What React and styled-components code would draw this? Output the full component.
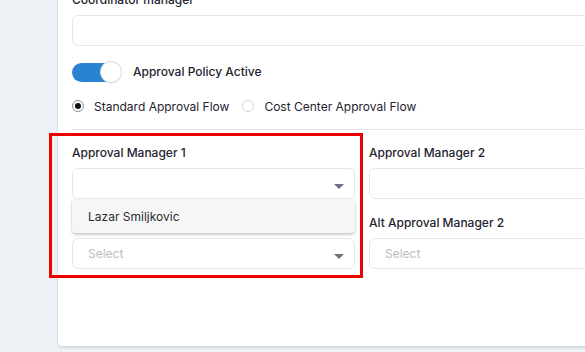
import React from "react";
import styled, { createGlobalStyle } from "styled-components";

const Global = createGlobalStyle`
  html, body { margin: 0; padding: 0; }
  body {
    background: #edf1f5;
    font-family: Inter, "Noto Sans", sans-serif;
    color: #1f2230;
    overflow: hidden;
    width: 585px;
    height: 352px;
  }
`;

const Page = styled.div`
  padding-left: 58px;
  height: 352px;
  overflow: hidden;
`;

const Card = styled.div`
  margin-top: -20px;
  width: 620px;
  background: #fff;
  border-radius: 0 0 0 4px;
  box-shadow: 0 2px 2px rgba(0, 0, 0, 0.1), -1px 0 1px rgba(0, 0, 0, 0.05);
  padding: 12px 0 77px 14px;
  display: flex;
  flex-direction: column;
`;

const Label = styled.div`
  font-size: 12px;
  line-height: 16px;
  font-weight: 500;
  color: #1f2230;
  white-space: nowrap;
`;

const Field = styled.div`
  position: relative;
  display: flex;
  flex-direction: column;
  gap: 7px;
`;

const Input = styled.div`
  position: relative;
  height: 31px;
  box-sizing: border-box;
  border: 1px solid #e3e7ee;
  border-radius: 6px;
  background: #fff;
  display: flex;
  align-items: center;
  padding: 0 15px;
  font-size: 12px;
  color: ${(p) => (p.$placeholder ? "#b9bdc4" : "#1f2230")};
`;

const Caret = styled.span`
  position: absolute;
  right: 10px;
  top: ${(p) => p.$top}px;
  width: 0;
  height: 0;
  border-left: 5px solid transparent;
  border-right: 5px solid transparent;
  border-top: 5px solid #6b7280;
`;

const ToggleRow = styled.div`
  margin-top: 16px;
  display: flex;
  align-items: center;
  gap: 12px;
  height: 20px;
`;

const Track = styled.div`
  position: relative;
  width: 49px;
  height: 19px;
  border-radius: 10px;
  background: #2a83d2;
`;

const Knob = styled.div`
  position: absolute;
  right: 0;
  top: -1px;
  width: 20px;
  height: 20px;
  border-radius: 50%;
  background: #fff;
  box-shadow: 0 0 0 1px #dcdfe4, 0 1px 2px rgba(0, 0, 0, 0.2);
`;

const RadioRow = styled.div`
  margin-top: 14px;
  height: 20px;
  display: flex;
  align-items: center;
  gap: 13px;
`;

const RadioItem = styled.label`
  display: flex;
  align-items: center;
  gap: 10px;
  font-size: 12px;
  font-weight: 400;
  color: #1f2230;
`;

const RadioCircle = styled.span`
  width: 12px;
  height: 12px;
  box-sizing: border-box;
  border-radius: 50%;
  border: 1px solid ${(p) => (p.$checked ? "#8a8d93" : "#d3d6db")};
  display: flex;
  align-items: center;
  justify-content: center;
  &::after {
    content: "";
    width: 6px;
    height: 6px;
    border-radius: 50%;
    background: ${(p) => (p.$checked ? "#111" : "transparent")};
  }
`;

const Divider = styled.div`
  margin-top: 13px;
  height: 1px;
  background: #e2e5ea;
`;

const Grid = styled.div`
  position: relative;
  margin-top: 15px;
  display: grid;
  grid-template-columns: 283px 283px;
  column-gap: 14px;
  row-gap: 16px;
`;

const Menu = styled.div`
  position: absolute;
  left: 0;
  right: 0;
  top: 55px;
  height: 33px;
  background: #f6f6f7;
  border-radius: 0 0 4px 4px;
  box-shadow: 0 2px 3px rgba(0, 0, 0, 0.18), 0 0 0 1px rgba(0, 0, 0, 0.04);
  display: flex;
  align-items: center;
  padding-left: 16px;
  font-size: 12px;
  color: #2a2c33;
  z-index: 2;
`;

const Highlight = styled.div`
  position: absolute;
  left: -23px;
  top: -12px;
  width: 314px;
  height: 145px;
  box-sizing: border-box;
  border: 3px solid #ee0000;
  pointer-events: none;
  z-index: 3;
`;

export default function App() {
  return (
    <>
      <Global />
      <Page>
        <Card>
          <Field>
            <Label>Coordinator manager</Label>
            <Input />
          </Field>
          <ToggleRow>
            <Track>
              <Knob />
            </Track>
            <Label>Approval Policy Active</Label>
          </ToggleRow>
          <RadioRow>
            <RadioItem>
              <RadioCircle $checked />
              Standard Approval Flow
            </RadioItem>
            <RadioItem>
              <RadioCircle />
              Cost Center Approval Flow
            </RadioItem>
          </RadioRow>
          <Divider />
          <Grid>
            <Highlight />
            <Field>
              <Label>Approval Manager 1</Label>
              <Input>
                <Caret $top={15} />
              </Input>
              <Menu>Lazar Smiljkovic</Menu>
            </Field>
            <Field>
              <Label>Approval Manager 2</Label>
              <Input />
            </Field>
            <Field>
              <Label>Alt Approval Manager 1</Label>
              <Input $placeholder>
                Select
                <Caret $top={15} />
              </Input>
            </Field>
            <Field>
              <Label>Alt Approval Manager 2</Label>
              <Input $placeholder>Select</Input>
            </Field>
          </Grid>
        </Card>
      </Page>
    </>
  );
}
